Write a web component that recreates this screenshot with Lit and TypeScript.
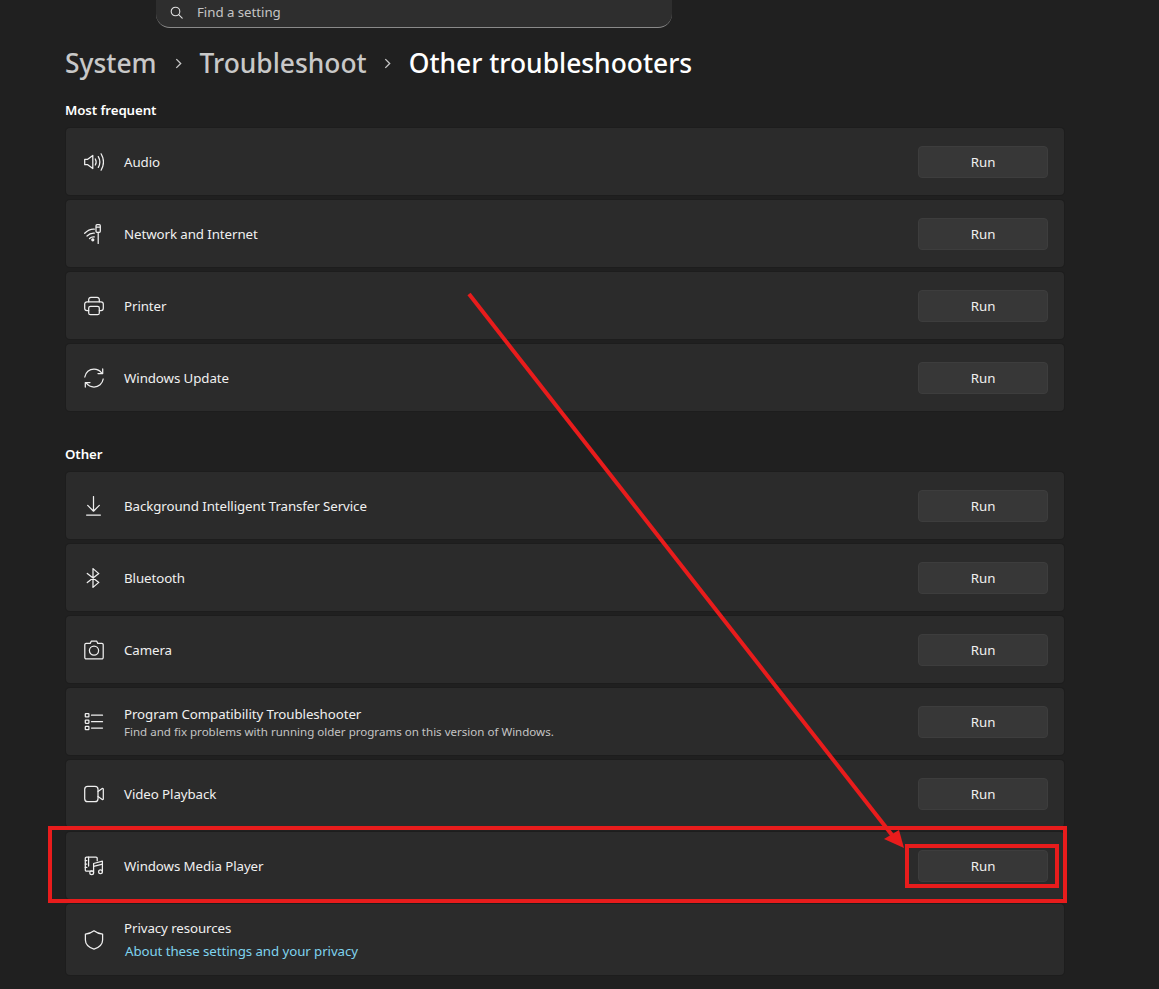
import { LitElement, html, css, svg } from "lit";
import { customElement } from "lit/decorators.js";

const s = (c: unknown) => html`<svg class="ico" viewBox="0 0 20 20" fill="none" stroke="#efefef" stroke-width="1.250" stroke-linecap="round" stroke-linejoin="round">${c}</svg>`;

const icons: Record<string, unknown> = {
  audio: s(svg`<path d="M.7 7.300h3L8.800 3.400v13.200L3.700 12.700h-3z"/><path d="M11.300 7c1.100 1.900 1.100 4.100 0 6"/><path d="M14.300 4.600c1.900 3.300 1.900 7.500 0 10.800"/><path d="M17.100 1.800c3 5.200 3 11.200 0 16.400"/>`),
  network: s(svg`<path d="M.7 9.300C3.500 6.400 6.900 5 10.300 5.200"/><path d="M3 12c2.100-2.100 4.600-3 7.300-2.800"/><path d="M5.500 14.500c1.400-1.300 3-1.800 4.800-1.600"/><circle cx="8.800" cy="15.800" r="1" fill="#efefef"/><rect x="12" y=".7" width="4.300" height="7.600" rx="1"/><path d="M14.200 8.300v11.200M12.500 3.200h3.300"/>`),
  printer: s(svg`<path d="M4.700 5.800V3.500A2.200 2.200 0 0 1 6.900 1.300h6.200a2.200 2.200 0 0 1 2.200 2.200v2.300"/><path d="M4.700 14.600H3a2.300 2.300 0 0 1-2.300-2.300V8.100A2.300 2.300 0 0 1 3 5.800h14a2.300 2.300 0 0 1 2.300 2.300v4.200a2.300 2.300 0 0 1-2.300 2.300h-1.700"/><rect x="4.700" y="10.300" width="10.600" height="8.400" rx="1.800"/>`),
  update: s(svg`<path d="M.8 9C1.500 4.400 5.300 1 10 1c3.100 0 5.900 1.500 7.600 3.800"/><path d="M18.700.9v4.600h-4.700"/><path d="M19.200 11c-.7 4.600-4.500 8-9.200 8-3.100 0-5.900-1.500-7.600-3.800"/><path d="M1.300 19.100v-4.600h4.700"/>`),
  download: s(svg`<path d="M9.500.6V15.200M3.700 9.400l5.800 5.800 5.800-5.800M2.600 19h13.800"/>`),
  bluetooth: s(svg`<path d="M9 .6v18.800l5.800-5L3.300 5.400M3.300 14.600 14.800 5.600 9 .6"/>`),
  camera: s(svg`<path d="M6.200 3.400 7.400 1h5.200l1.200 2.400h4a1.300 1.300 0 0 1 1.400 1.300v12.900a1.300 1.300 0 0 1-1.400 1.300H2.200a1.300 1.300 0 0 1-1.400-1.300V4.700a1.300 1.300 0 0 1 1.400-1.300z"/><circle cx="10" cy="10.600" r="4.600"/>`),
  list: s(svg`<rect x="1.300" y="1.600" width="3.600" height="3.300" rx=".5"/><rect x="1.300" y="8" width="3.600" height="3.300" rx=".5"/><rect x="1.300" y="14.400" width="3.600" height="3.300" rx=".5"/><path d="M7.500 3.200h11M7.500 9.700h11M7.500 16h11"/>`),
  video: s(svg`<rect x=".7" y="2.300" width="13.300" height="15.400" rx="3"/><path d="M14 7.500l4.200-3c.5-.3 1.100 0 1.100.6v9.800c0 .6-.6.900-1.100.6l-4.200-3"/>`),
  media: s(svg`<path d="M8.300 15.200H2.500a1.200 1.200 0 0 1-1.200-1.200V2.400a1.200 1.200 0 0 1 1.200-1.200h9.500a1.200 1.200 0 0 1 1.200 1.200v2.300"/><path d="M4.600 1.200v8.800M1.300 4.600h1.500M1.300 8h1.500M1.300 11.400h1.500"/><path d="M9.600 16.300V7.500l8.800-2.300v10.400"/><path d="M9.600 10.400l8.800-2.300"/><circle cx="7.700" cy="16.800" r="1.900"/><circle cx="16.500" cy="15.800" r="1.900"/>`),
  shield: s(svg`<path d="M10 .8c2.500 2 5.400 3.100 8.600 3.300v6c0 4.100-3 7.300-8.600 9.100-5.600-1.800-8.600-5-8.600-9.100v-6C4.600 3.900 7.500 2.800 10 .8z"/>`),
};

interface Row { icon: string; title: string; sub?: string }

const frequent: Row[] = [
  { icon: "audio", title: "Audio" },
  { icon: "network", title: "Network and Internet" },
  { icon: "printer", title: "Printer" },
  { icon: "update", title: "Windows Update" },
];
const other: Row[] = [
  { icon: "download", title: "Background Intelligent Transfer Service" },
  { icon: "bluetooth", title: "Bluetooth" },
  { icon: "camera", title: "Camera" },
  { icon: "list", title: "Program Compatibility Troubleshooter", sub: "Find and fix problems with running older programs on this version of Windows." },
  { icon: "video", title: "Video Playback" },
  { icon: "media", title: "Windows Media Player" },
];

@customElement("app-root")
export class AppRoot extends LitElement {
  static styles = css`
    :host {
      display: block;
      position: relative;
      width: 1159px;
      height: 989px;
      overflow: hidden;
      background: #202020;
      color: #fff;
      font-family: "Noto Sans", "Open Sans", "Liberation Sans", sans-serif;
      font-size: 13.3px;
    }
    .page { display: flex; flex-direction: column; padding: 0 95px 0 66px; }
    .search {
      display: flex;
      align-items: center;
      gap: 14px;
      box-sizing: border-box;
      width: 516px;
      height: 28px;
      margin-left: 90px;
      padding: 0 0 3px 14px;
      background: #2e2e2e;
      border-bottom: 1px solid #8a8a8a;
      border-radius: 0 0 14px 14px;
      color: #c5c5c5;
      letter-spacing: -0.05px;
    }
    .search svg { width: 13px; height: 13px; flex: none; }
    .crumbs {
      display: flex;
      align-items: center;
      height: 40px;
      margin: 15px 0 0 -1px;
      font-size: 26.4px;
      font-weight: 500;
      white-space: nowrap;
    }
    .crumb { color: #c8c8c8; }
    .crumb.now { color: #fff; }
    .sep { width: 43px; display: flex; justify-content: center; }
    .sep.short { width: 42px; }
    .sep svg { width: 11px; height: 11px; }
    h2 {
      margin: 0 0 0 -1px;
      font-size: 13.3px;
      font-weight: 600;
      line-height: 20px;
      letter-spacing: -0.1px;
    }
    .h1 { margin-top: 17px; }
    .h2 { margin-top: 33px; }
    .list { display: flex; flex-direction: column; gap: 5px; margin-top: 8px; }
    .row {
      display: flex;
      align-items: center;
      box-sizing: border-box;
      height: 67px;
      padding: 0 16px 0 18px;
      background: #2b2b2b;
      border-radius: 4px;
      box-shadow: 0 0 0 1px #1d1d1d;
    }
    .row.tall { height: 71px; }
    .ico { width: 20px; height: 20px; flex: none; margin-right: 20px; }
    .text { flex: 1; display: flex; flex-direction: column; min-width: 0; }
    .title { color: #f0f0f0; line-height: 18px; letter-spacing: -0.08px; }
    .sub { color: #c4c4c4; font-size: 11.550px; line-height: 15px; margin: 1px 0 -1px; }
    .link { color: #7fd3ee; line-height: 18px; margin: 5px 0 0 1px; letter-spacing: -0.08px; }
    button {
      width: 130px;
      height: 32px;
      padding: 0;
      font: inherit;
      color: #f0f0f0;
      background: #373737;
      border: 1px solid #3d3d3d;
      border-radius: 4px;
    }
    .mark { position: absolute; pointer-events: none; }
    .box { box-sizing: border-box; border: 4px solid #e81c1c; }
    .outer { left: 48px; top: 826px; width: 1019px; height: 77px; }
    .inner { left: 905px; top: 844px; width: 154px; height: 44px; }
    .arrow { left: 0; top: 0; width: 1159px; height: 989px; }
  `;

  private row(r: Row) {
    return html`<div class="row">
      ${icons[r.icon]}
      <div class="text">
        <span class="title">${r.title}</span>
        ${r.sub ? html`<span class="sub">${r.sub}</span>` : ""}
      </div>
      <button>Run</button>
    </div>`;
  }

  private chevron(short = false) {
    return html`<span class="sep ${short ? "short" : ""}"><svg viewBox="0 0 10 10" fill="none" stroke="#c8c8c8" stroke-width="1.200"><path d="M3 1l4 4-4 4"/></svg></span>`;
  }

  render() {
    return html`
      <div class="page">
        <div class="search">
          <svg viewBox="0 0 13 13" fill="none" stroke="#e0e0e0" stroke-width="1.100" stroke-linecap="round"><circle cx="5.500" cy="5.500" r="4.300"/><path d="M8.700 8.700l3.500 3.500"/></svg>
          <span>Find a setting</span>
        </div>
        <div class="crumbs">
          <span class="crumb">System</span>${this.chevron()}
          <span class="crumb">Troubleshoot</span>${this.chevron(true)}
          <span class="crumb now">Other troubleshooters</span>
        </div>
        <h2 class="h1">Most frequent</h2>
        <div class="list">${frequent.map((r) => this.row(r))}</div>
        <h2 class="h2">Other</h2>
        <div class="list">
          ${other.map((r) => this.row(r))}
          <div class="row tall">
            ${icons.shield}
            <div class="text">
              <span class="title">Privacy resources</span>
              <span class="link">About these settings and your privacy</span>
            </div>
          </div>
        </div>
      </div>
      <div class="mark box outer"></div>
      <div class="mark box inner"></div>
      <svg class="mark arrow" viewBox="0 0 1159 989">
        <line x1="469" y1="294" x2="892" y2="835" stroke="#e81c1c" stroke-width="4"/>
        <polygon points="904,848 884,839 899,830" fill="#e81c1c"/>
      </svg>
    `;
  }
}
